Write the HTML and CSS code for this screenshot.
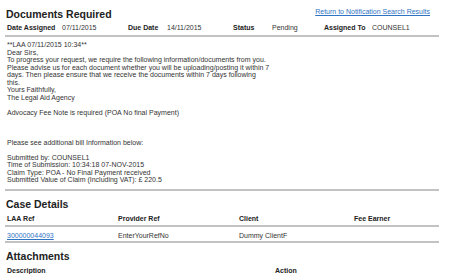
FILE: index.html
```html
<!DOCTYPE html>
<html lang="en">
<head>
    <meta charset="UTF-8">
    <meta name="viewport" content="width=device-width, initial-scale=1.0">
    <title>Documents Required</title>
    <link rel="stylesheet" href="styles.css">
</head>
<body>
    <div class="page">
        <div class="page-head">
            <h1>Documents Required</h1>
            <a class="back-link" href="#">Return to Notification Search Results</a>
        </div>

        <div class="info-row">
            <span class="label">Date Assigned</span>
            <span>07/11/2015</span>
            <span class="label">Due Date</span>
            <span>14/11/2015</span>
            <span class="label">Status</span>
            <span>Pending</span>
            <span class="label">Assigned To</span>
            <span>COUNSEL1</span>
        </div>

        <div class="message">**LAA 07/11/2015 10:34**
Dear Sirs,
To progress your request, we require the following information/documents from you.
Please advise us for each document whether you will be uploading/posting it within 7
days. Then please ensure that we receive the documents within 7 days following
this.
Yours Faithfully,
The Legal Aid Agency

Advocacy Fee Note is required (POA No final Payment)



Please see additional bill Information below:

Submitted by: COUNSEL1
Time of Submission: 10:34:18 07-NOV-2015
Claim Type: POA - No Final Payment received
Submitted Value of Claim (Including VAT): £ 220.5</div>

        <h2>Case Details</h2>
        <div class="grid case-grid head">
            <span>LAA Ref</span>
            <span>Provider Ref</span>
            <span>Client</span>
            <span>Fee Earner</span>
        </div>
        <div class="grid case-grid row">
            <a href="#">300000044093</a>
            <span>EnterYourRefNo</span>
            <span>Dummy ClientF</span>
            <span></span>
        </div>

        <h2>Attachments</h2>
        <div class="grid attach-grid head">
            <span>Description</span>
            <span>Action</span>
        </div>
    </div>
</body>
</html>
```

FILE: styles.css
```css
* {
    padding: 0;
    margin: 0;
    box-sizing: border-box;
}

:root {
    --text-color: #333;
    --heading-color: #222;
    --rule-color: #c2c2c2;
    --link-color: #2f73c4;
}

body {
    font-family: 'Liberation Sans', Arial, Helvetica, sans-serif;
    font-size: 7px;
    line-height: 8px;
    color: var(--text-color);
    background: white;
}

.page {
    width: 434px;
    margin: 0 5px;
}

.page-head {
    display: flex;
    justify-content: space-between;
    align-items: flex-start;
    padding-left: 1px;
}

h1, h2 {
    font-size: 10.5px;
    line-height: 12px;
    font-weight: bold;
    color: var(--heading-color);
}

h1 {
    margin-top: 8px;
}

h2 {
    margin-top: 7px;
    padding-left: 1px;
}

.back-link {
    margin-top: 8px;
    margin-right: 9px;
}

a {
    color: var(--link-color);
    text-decoration: underline;
}

.info-row {
    display: grid;
    grid-template-columns: 55px 66px 39px 66px 39px 52px 48px 1fr;
    padding: 3.5px 2px 3.5px;
    border-bottom: 2px solid var(--rule-color);
}

.label {
    font-weight: bold;
    color: var(--heading-color);
}

.message {
    white-space: pre-line;
    line-height: 7.5px;
    padding: 4.25px 2px 5px;
    border-bottom: 2px solid var(--rule-color);
}

.grid {
    display: grid;
    padding-left: 2px;
}

.case-grid {
    grid-template-columns: 111px 121px 115px 1fr;
}

.attach-grid {
    grid-template-columns: 268px 1fr;
}

.head {
    font-weight: bold;
    color: var(--heading-color);
    padding-top: 5.5px;
    padding-bottom: 1.5px;
    border-bottom: 2px solid var(--rule-color);
}

.attach-grid.head {
    border-bottom: none;
}

.row {
    padding-top: 5px;
    padding-bottom: 1px;
    border-bottom: 2px solid var(--rule-color);
}
```
